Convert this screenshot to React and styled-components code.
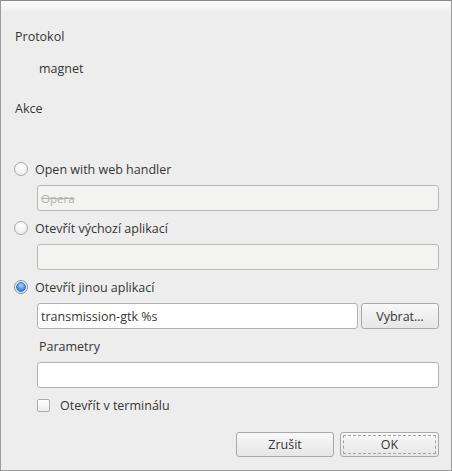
import React from "react";
import styled, { createGlobalStyle, css } from "styled-components";

const Global = createGlobalStyle`
  html, body { margin: 0; padding: 0; background: #ededed; }
  * { box-sizing: border-box; }
`;

const Window = styled.div`
  width: 452px;
  height: 471px;
  border: 1px solid #9c9c9c;
  border-top-color: #8a8a8a;
  background: linear-gradient(#fafafa 0px, #f6f6f6 6px, #ededed 12px, #ededed 100%);
  display: flex;
  flex-direction: column;
  padding: 0 12px 0 0;
  font-family: "Open Sans", "DejaVu Sans", sans-serif;
  font-size: 12.5px;
  color: #363636;
`;

const TextRow = styled.div`
  height: 18px;
  line-height: 18px;
  margin-top: ${(p) => p.$mt}px;
  padding-left: ${(p) => p.$indent}px;
  white-space: nowrap;
`;

const OptionRow = styled.label`
  display: flex;
  align-items: center;
  gap: 7px;
  height: 18px;
  margin-top: ${(p) => p.$mt}px;
  padding-left: ${(p) => p.$indent}px;
  white-space: nowrap;
`;

const Radio = styled.span`
  width: 14px;
  height: 14px;
  border-radius: 50%;
  border: 1px solid #a9a9a9;
  background: radial-gradient(circle at 50% 35%, #ffffff 0%, #f4f4f4 50%, #e2e2e2 100%);
  display: flex;
  align-items: center;
  justify-content: center;
  ${(p) =>
    p.$checked &&
    css`
      border-color: #7f93ad;
      &::after {
        content: "";
        width: 8px;
        height: 8px;
        border-radius: 50%;
        border: 1px solid #3c6fb8;
        background: radial-gradient(circle at 50% 30%, #a9d2ff 0%, #4d8fe6 60%, #2f6bc6 100%);
      }
    `}
`;

const Check = styled.span`
  width: 13px;
  height: 13px;
  border-radius: 2px;
  border: 1px solid #acacac;
  background: linear-gradient(#ffffff, #ececec);
  margin-right: 3px;
`;

const Field = styled.div`
  height: 26px;
  margin-top: ${(p) => p.$mt}px;
  margin-left: 36px;
  border: 1px solid ${(p) => (p.$disabled ? "#b9b9b9" : "#b2b2b2")};
  border-radius: 3px;
  background: ${(p) => (p.$disabled ? "#f3f3f1" : "#ffffff")};
  display: flex;
  align-items: center;
  padding-left: 3px;
  white-space: nowrap;
  color: #363636;
`;

const Placeholder = styled.span`
  color: #b0b0b0;
  text-decoration: line-through;
  font-size: 11.5px;
`;

const FieldRow = styled.div`
  display: flex;
  gap: 3px;
  margin-top: ${(p) => p.$mt}px;
  margin-left: 36px;
  height: 26px;
`;

const FlexField = styled(Field)`
  flex: 1;
  margin: 0;
`;

const Button = styled.button`
  font: inherit;
  color: #363636;
  width: ${(p) => p.$w}px;
  height: ${(p) => p.$h}px;
  border: 1px solid #a9a9a9;
  border-radius: 3px;
  background: linear-gradient(#f8f8f8, #e6e6e6);
  padding: 0;
  position: relative;
  ${(p) =>
    p.$focus &&
    css`
      &::after {
        content: "";
        position: absolute;
        inset: 2px;
        border: 1px dashed #a4a4a4;
        border-radius: 1px;
      }
    `}
`;

const Footer = styled.div`
  display: flex;
  justify-content: flex-end;
  gap: 6px;
  margin-top: 18px;
`;

export default function App() {
  return (
    <>
      <Global />
      <Window>
        <TextRow $mt={27} $indent={14}>Protokol</TextRow>
        <TextRow $mt={14} $indent={38}>magnet</TextRow>
        <TextRow $mt={22} $indent={14}>Akce</TextRow>

        <OptionRow $mt={42} $indent={13}>
          <Radio />
          Open with web handler
        </OptionRow>
        <Field $mt={7} $disabled>
          <Placeholder>Opera</Placeholder>
        </Field>

        <OptionRow $mt={8} $indent={13}>
          <Radio />
          Otevřít výchozí aplikací
        </OptionRow>
        <Field $mt={7} $disabled />

        <OptionRow $mt={8} $indent={13}>
          <Radio $checked />
          Otevřít jinou aplikací
        </OptionRow>
        <FieldRow $mt={7}>
          <FlexField>transmission-gtk %s</FlexField>
          <Button $w={78} $h={26}>Vybrat…</Button>
        </FieldRow>

        <TextRow $mt={9} $indent={38}>Parametry</TextRow>
        <Field $mt={6} />

        <OptionRow $mt={8} $indent={36}>
          <Check />
          Otevřít v terminálu
        </OptionRow>

        <Footer>
          <Button $w={98} $h={25}>Zrušit</Button>
          <Button $w={99} $h={25} $focus>OK</Button>
        </Footer>
      </Window>
    </>
  );
}
